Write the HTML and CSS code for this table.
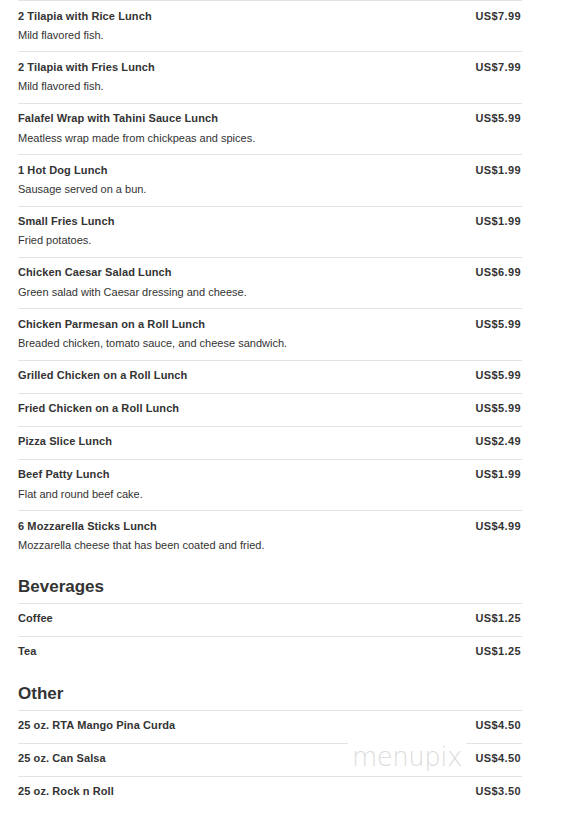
FILE: index.html
```html
<!DOCTYPE html>
<html>
<head>
<meta charset="utf-8">
<link rel="stylesheet" href="styles.css">
</head>
<body>
<div class="menu">
  <section class="section">
    <div class="item"><div class="row"><span class="name">2 Tilapia with Rice Lunch</span><span class="price">US$7.99</span></div><div class="desc">Mild flavored fish.</div></div>
    <div class="item"><div class="row"><span class="name">2 Tilapia with Fries Lunch</span><span class="price">US$7.99</span></div><div class="desc">Mild flavored fish.</div></div>
    <div class="item"><div class="row"><span class="name">Falafel Wrap with Tahini Sauce Lunch</span><span class="price">US$5.99</span></div><div class="desc">Meatless wrap made from chickpeas and spices.</div></div>
    <div class="item"><div class="row"><span class="name">1 Hot Dog Lunch</span><span class="price">US$1.99</span></div><div class="desc">Sausage served on a bun.</div></div>
    <div class="item"><div class="row"><span class="name">Small Fries Lunch</span><span class="price">US$1.99</span></div><div class="desc">Fried potatoes.</div></div>
    <div class="item"><div class="row"><span class="name">Chicken Caesar Salad Lunch</span><span class="price">US$6.99</span></div><div class="desc">Green salad with Caesar dressing and cheese.</div></div>
    <div class="item"><div class="row"><span class="name">Chicken Parmesan on a Roll Lunch</span><span class="price">US$5.99</span></div><div class="desc">Breaded chicken, tomato sauce, and cheese sandwich.</div></div>
    <div class="item"><div class="row"><span class="name">Grilled Chicken on a Roll Lunch</span><span class="price">US$5.99</span></div></div>
    <div class="item"><div class="row"><span class="name">Fried Chicken on a Roll Lunch</span><span class="price">US$5.99</span></div></div>
    <div class="item"><div class="row"><span class="name">Pizza Slice Lunch</span><span class="price">US$2.49</span></div></div>
    <div class="item"><div class="row"><span class="name">Beef Patty Lunch</span><span class="price">US$1.99</span></div><div class="desc">Flat and round beef cake.</div></div>
    <div class="item"><div class="row"><span class="name">6 Mozzarella Sticks Lunch</span><span class="price">US$4.99</span></div><div class="desc">Mozzarella cheese that has been coated and fried.</div></div>
  </section>
  <section class="section">
    <h2 class="heading">Beverages</h2>
    <div class="item"><div class="row"><span class="name">Coffee</span><span class="price">US$1.25</span></div></div>
    <div class="item"><div class="row"><span class="name">Tea</span><span class="price">US$1.25</span></div></div>
  </section>
  <section class="section">
    <h2 class="heading">Other</h2>
    <div class="item"><div class="row"><span class="name">25 oz. RTA Mango Pina Curda</span><span class="price">US$4.50</span></div></div>
    <div class="item"><div class="row"><span class="name">25 oz. Can Salsa</span><span class="price">US$4.50</span></div></div>
    <div class="item"><div class="row"><span class="name">25 oz. Rock n Roll</span><span class="price">US$3.50</span></div></div>
  </section>
  <div class="watermark">menupix</div>
</div>
</body>
</html>
```

FILE: styles.css
```css
html, body {
  margin: 0;
  padding: 0;
  background: #fff;
}
body {
  font-family: "Liberation Sans", Arial, sans-serif;
  color: #333;
  padding-left: 18px;
}
.menu {
  position: relative;
  width: 504px;
}
.section {
  margin: 0;
}
.heading {
  font-size: 17px;
  font-weight: bold;
  line-height: 20px;
  margin: 15px 0 6px 0;
  color: #333;
}
.item {
  border-top: 1px solid #e3e3e3;
  padding: 9.5px 0;
}
.row {
  display: flex;
  justify-content: space-between;
  align-items: baseline;
  line-height: 13px;
}
.name {
  font-size: 11px;
  font-weight: bold;
  letter-spacing: 0.1px;
  color: #333;
  position: relative;
  top: -1px;
}
.price {
  font-size: 11px;
  font-weight: bold;
  letter-spacing: 0.4px;
  color: #333;
  padding-right: 1px;
  position: relative;
  top: -1px;
}
.desc {
  font-size: 11px;
  line-height: 13px;
  margin-top: 5.4px;
  color: #333;
}
.watermark {
  position: absolute;
  left: 330px;
  top: 742px;
  padding: 0 4px;
  background: #fff;
  font-family: "DejaVu Sans", sans-serif;
  font-weight: 200;
  font-size: 26px;
  line-height: 30px;
  color: #dcdcdc;
  letter-spacing: -0.5px;
}
```
